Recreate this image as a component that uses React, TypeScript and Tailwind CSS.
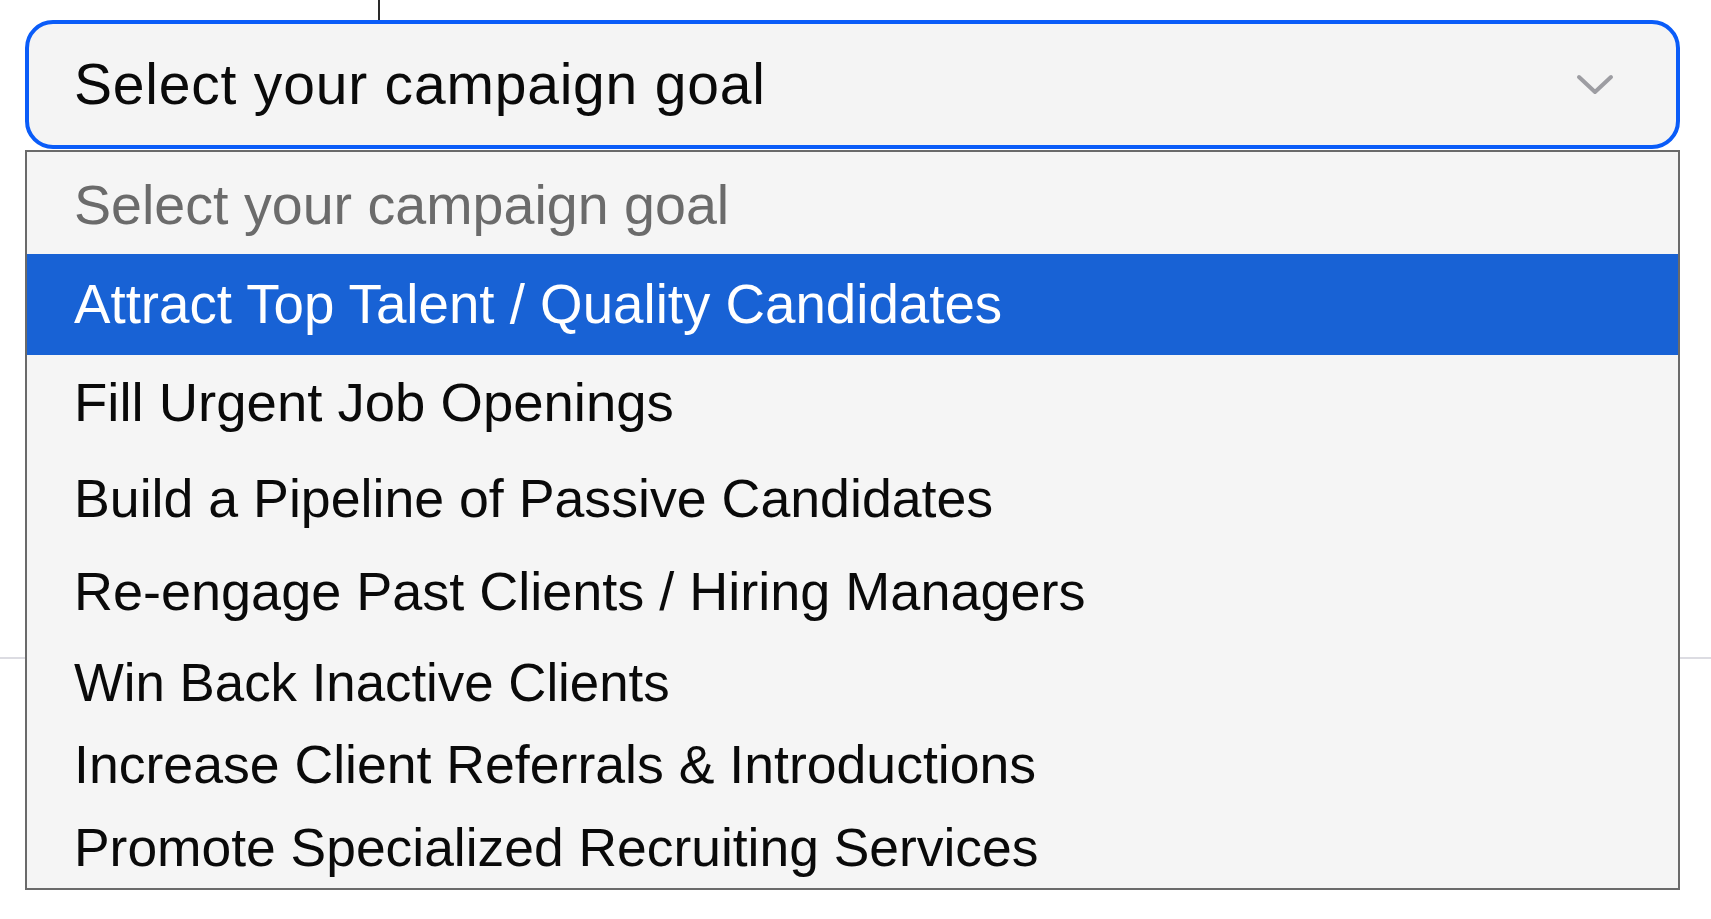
import React from "react";

const options: { label: string; h: string; pt: string; fs: string; cls: string }[] = [
  { label: "Attract Top Talent / Quality Candidates", h: "h-[101px]", pt: "pt-[20px]", fs: "text-[54.7px]", cls: "bg-[#1862d5] text-white" },
  { label: "Fill Urgent Job Openings", h: "h-[97px]", pt: "pt-[18px]", fs: "text-[54.5px]", cls: "text-[#0a0a0a]" },
  { label: "Build a Pipeline of Passive Candidates", h: "h-[93px]", pt: "pt-[16px]", fs: "text-[53.7px]", cls: "text-[#0a0a0a]" },
  { label: "Re-engage Past Clients / Hiring Managers", h: "h-[93px]", pt: "pt-[16px]", fs: "text-[54px]", cls: "text-[#0a0a0a]" },
  { label: "Win Back Inactive Clients", h: "h-[91px]", pt: "pt-[15px]", fs: "text-[52.8px]", cls: "text-[#0a0a0a]" },
  { label: "Increase Client Referrals & Introductions", h: "h-[71px]", pt: "pt-[5px]", fs: "text-[53.6px]", cls: "text-[#0a0a0a]" },
  { label: "Promote Specialized Recruiting Services", h: "h-[88px]", pt: "pt-[18px]", fs: "text-[53.4px]", cls: "text-[#0a0a0a]" },
];

export default function App() {
  return (
    <div
      className="relative w-[1711px] h-[919px] overflow-hidden bg-white"
      style={{ fontFamily: '"Liberation Sans", Arial, Helvetica, sans-serif' }}
    >
      {/* underlying page */}
      <div className="ml-[378px] w-[2px] h-[20px] bg-[#2a2a2a]" />
      <div className="ml-[25px] mr-[31px]">
        <div className="flex h-[129px] items-center justify-between rounded-[28px] border-[4px] border-[#0a5cf8] bg-[#f4f4f4] pl-[45px] pr-[62px]">
          <span className="text-[57px] leading-none tracking-[0.8px] text-[#0a0a0a]">Select your campaign goal</span>
          <svg width="38" height="24" viewBox="0 0 38 24" fill="none" className="shrink-0">
            <path d="M3 4 L19 19 L35 4" stroke="#9d9da2" strokeWidth="4" strokeLinecap="round" strokeLinejoin="round" />
          </svg>
        </div>
      </div>
      <div className="mt-[508px] h-[2px] w-full bg-[#dcdce2]" />

      {/* dropdown overlay */}
      <div className="absolute left-[25px] top-[150px] w-[1655px] border-2 border-[#6a6a6a] bg-[#f5f5f5]">
        <div className="h-[102px] pt-[23px] pl-[47px] text-[55.6px] leading-[60px] text-[#6b6b6b]">
          Select your campaign goal
        </div>
        {options.map((o) => (
          <div key={o.label} className={`${o.h} ${o.pt} ${o.fs} ${o.cls} pl-[47px] leading-[60px] whitespace-nowrap`}>
            {o.label}
          </div>
        ))}
      </div>
    </div>
  );
}
